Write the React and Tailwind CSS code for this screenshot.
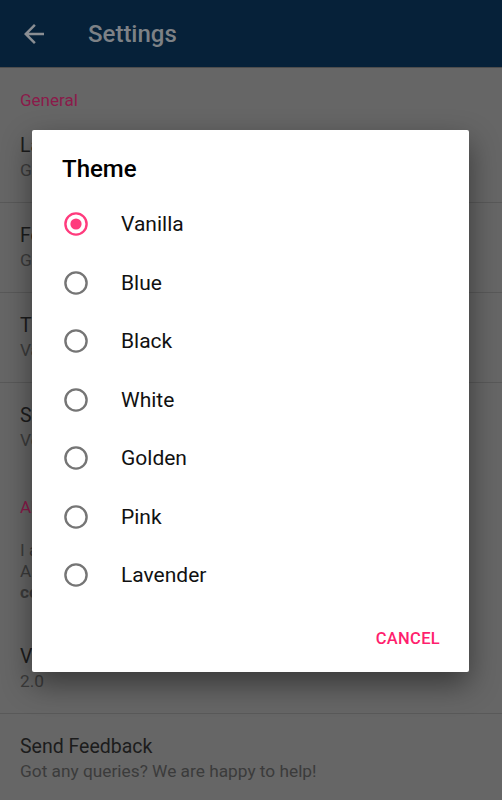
import React from 'react';

const themes = ['Vanilla', 'Blue', 'Black', 'White', 'Golden', 'Pink', 'Lavender'];

function Radio({ checked }) {
  return (
    <svg width="24" height="24" viewBox="0 0 24 24" className="shrink-0">
      <circle cx="12" cy="12" r="10.6" fill="none" stroke={checked ? '#ff3b7d' : '#757575'} strokeWidth="2.4" />
      {checked && <circle cx="12" cy="12" r="5.6" fill="#ff3b7d" />}
    </svg>
  );
}

function Row({ title, sub, border = true }) {
  return (
    <div className={`px-5 pt-[21px] pb-[20px] ${border ? 'border-b border-[#595959]' : ''}`}>
      <div className="text-[19.5px] leading-6 text-[#1c1c1c]">{title}</div>
      <div className="text-[17.3px] leading-6 text-[#3b3b3b]">{sub}</div>
    </div>
  );
}

export default function App() {
  return (
    <div className="relative w-[502px] h-[800px] overflow-hidden bg-[#666666]" style={{ fontFamily: 'Roboto, "Noto Sans", sans-serif' }}>
      {/* toolbar, already dimmed by the dialog scrim */}
      <div className="h-[68px] bg-[#062139] flex items-center border-b border-[#4d4d4d]">
        <div className="w-[88px] pl-[19px] flex items-center">
          <svg width="30" height="30" viewBox="0 0 24 24" fill="#8a8e93">
            <path d="M20 11H7.83l5.59-5.59L12 4l-8 8 8 8 1.41-1.41L7.83 13H20v-2z" />
          </svg>
        </div>
        <div className="text-[24px] font-medium text-[#7d8186]">Settings</div>
      </div>

      <div className="px-5 pt-[22px] pb-[3px] text-[17px] leading-5 text-[#8b1a4a]">General</div>
      <Row title="Language" sub="Gujarati" />
      <Row title="Font Size" sub="Gujarati font" />
      <Row title="Theme" sub="Vanilla" />
      <Row title="Search" sub="Verse" border={false} />

      <div className="px-5 pt-[25px] pb-[4px] text-[17px] leading-5 text-[#8b1a4a]">About</div>
      <div className="px-5 pt-[19px] pb-[21px] text-[17.3px] leading-[21px] text-[#3b3b3b]">
        I am a developer who loves building apps.<br />
        Any feedback is welcome at<br />
        <span className="font-bold">contact@example.com</span>
      </div>
      <Row title="Version" sub="2.0" />
      <Row title="Send Feedback" sub="Got any queries? We are happy to help!" border={false} />

      {/* dialog */}
      <div className="absolute left-[32px] top-[130px] w-[437px] h-[542px] bg-white rounded-[2px] shadow-[0_12px_30px_rgba(0,0,0,0.45)] flex flex-col">
        <div className="pl-[30px] pt-[24px] text-[24px] leading-[30px] font-medium text-black">Theme</div>
        <div className="mt-[11px] flex flex-col">
          {themes.map((t, i) => (
            <div key={t} className="h-[58.5px] flex items-center pl-[32px]">
              <Radio checked={i === 0} />
              <span className="ml-[33px] text-[21px] leading-7 text-[#111111]">{t}</span>
            </div>
          ))}
        </div>
        <div className="mt-auto mb-[15px] mr-[21px] flex justify-end">
          <button className="h-[36px] px-2 text-[16.5px] font-medium tracking-[0.3px] text-[#ff1f6e]">CANCEL</button>
        </div>
      </div>
    </div>
  );
}
